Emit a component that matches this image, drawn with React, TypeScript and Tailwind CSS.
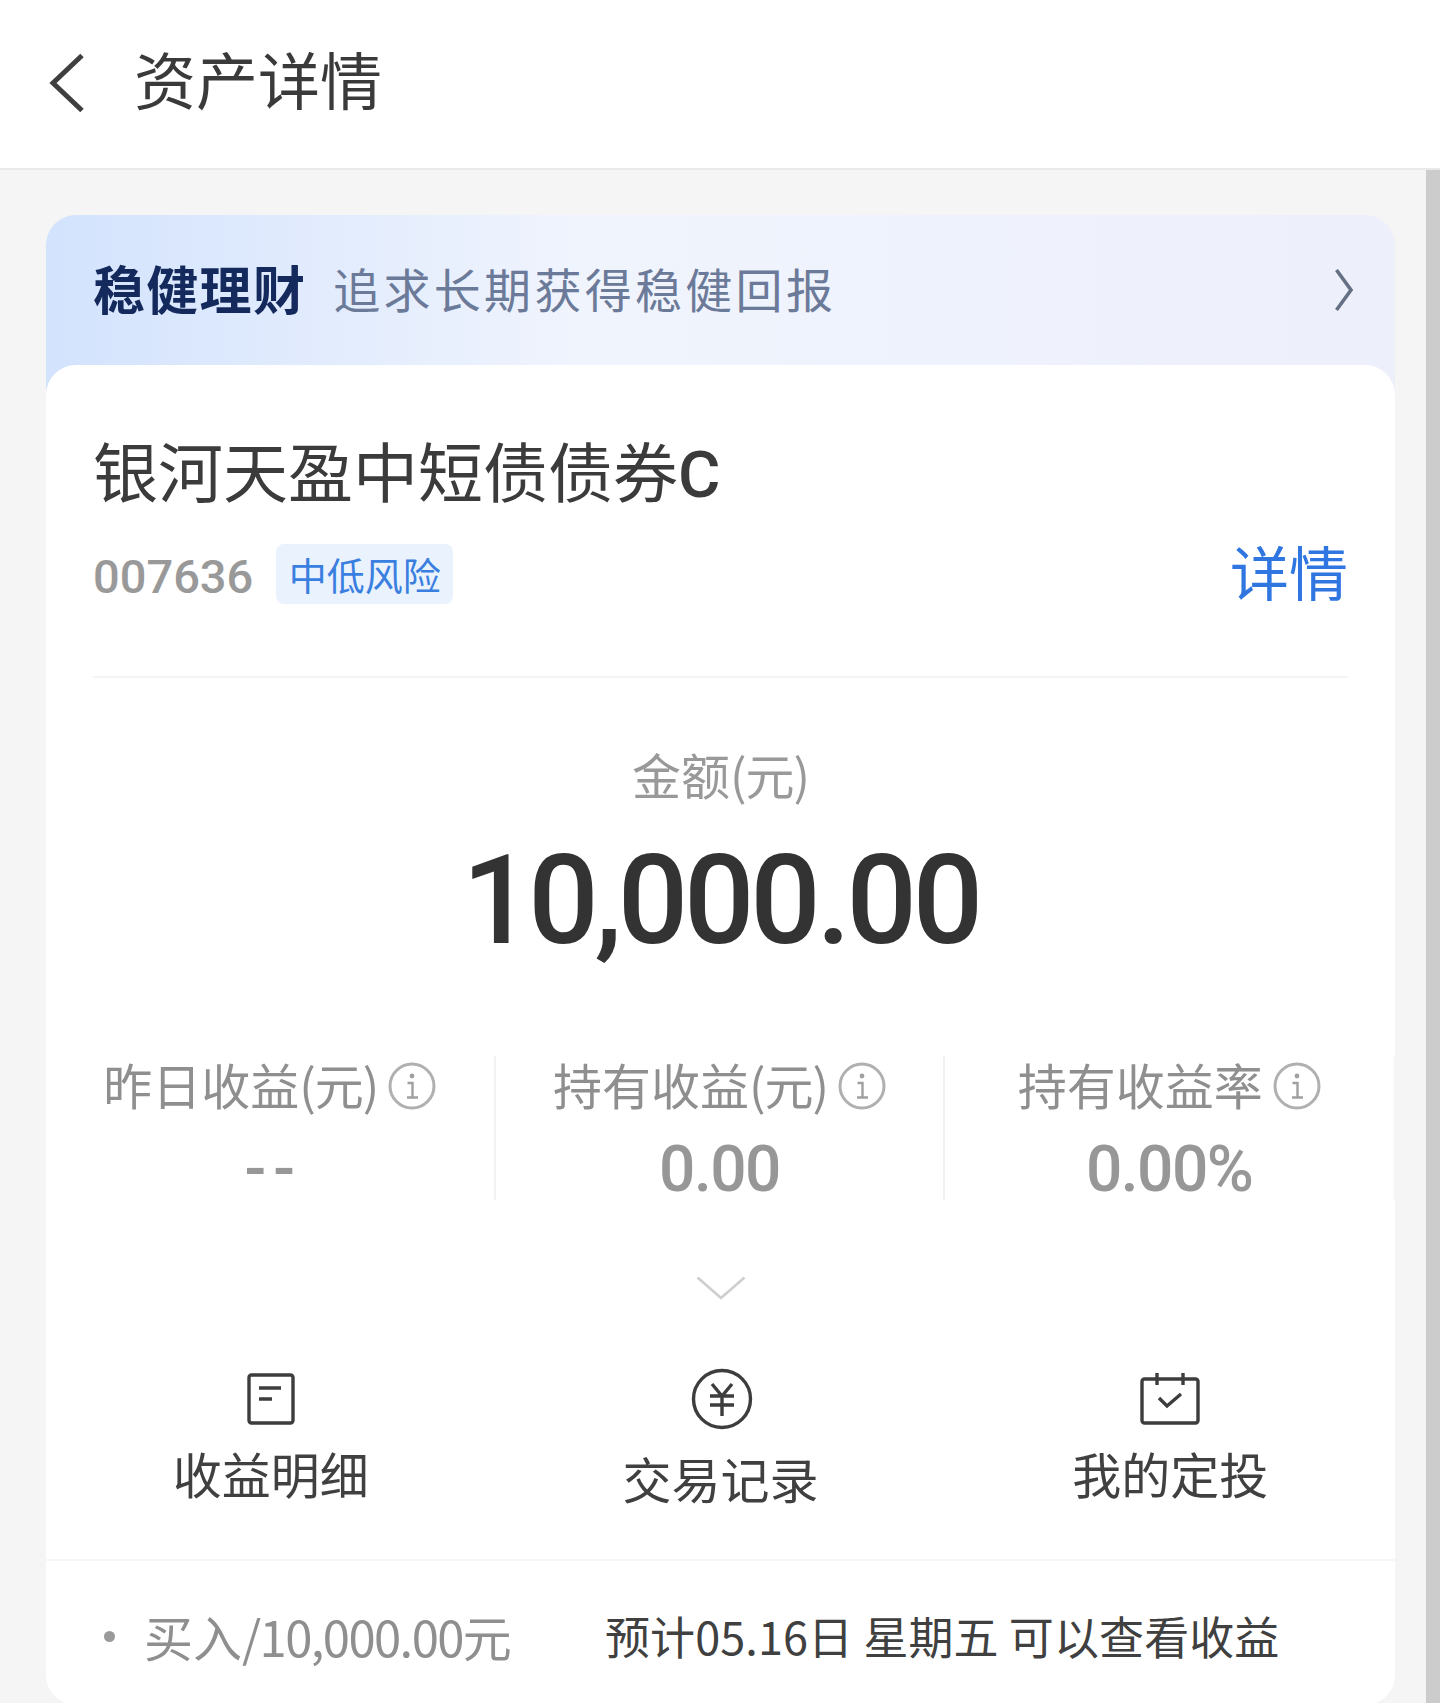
const cjk = "font-['Noto_Sans_CJK_SC','Noto_Sans',sans-serif]";

function Info() {
  return (
    <svg width="48" height="48" viewBox="0 0 48 48" fill="none" className="mt-[4px] shrink-0">
      <circle cx="24" cy="24" r="22" stroke="#b0b0b0" strokeWidth="3" />
      <circle cx="24" cy="14" r="2.4" fill="#a0a0a0" />
      <path d="M19.5 21h5v14M19 35.5h11" stroke="#a0a0a0" strokeWidth="2.4" />
    </svg>
  );
}

function Stat({ label, value, unit, last, wide }: { label: string; value: string; unit?: boolean; last?: boolean; wide?: boolean }) {
  return (
    <div className={`flex h-[144px] flex-col items-center border-r-2 ${last ? "border-[#f8f8f8]" : "border-[#f2f2f2]"}`}>
      <div className="mt-[3px] flex h-[50px] items-center gap-[10px]">
        <span className="text-[49px] leading-[50px] text-[#8f8f8f]">
          {label}
          {unit && <span className="tracking-[-1px]">(元)</span>}
        </span>
        <Info />
      </div>
      <div
        className={`mt-[25px] font-['Roboto',sans-serif] text-[64px] font-medium leading-[72px] text-[#979797] ${
          wide ? "pl-[7px] tracking-[7px]" : "tracking-[-1.5px]"
        }`}
      >
        {value}
      </div>
    </div>
  );
}

function Action({ label, icon, shift }: { label: string; icon: React.ReactNode; shift: string }) {
  return (
    <div className={`flex flex-col items-center ${shift}`}>
      {icon}
      <div className="mt-[23px] text-[49px] leading-[50px] text-[#404040]">{label}</div>
    </div>
  );
}

export default function App() {
  return (
    <div className={`flex h-[1703px] w-full flex-col overflow-hidden bg-[#f5f5f5] ${cjk}`}>
      <header className="flex h-[170px] shrink-0 items-center border-b-2 border-[#e9e9e9] bg-white pb-[2px] pl-[49px]">
        <svg width="36" height="60" viewBox="0 0 36 60" fill="none">
          <path d="M33 2.5 4 30l29 27.5" stroke="#3f3f3f" strokeWidth="5" />
        </svg>
        <h1 className="mb-[10px] ml-[49px] text-[62px] font-normal leading-[70px] text-[#3a3a3a]">资产详情</h1>
      </header>

      <div className="flex min-h-0 flex-1">
        <main className="min-w-0 flex-1 pl-[46px] pr-[31px] pt-[45px]">
          <section className="flex h-[180px] items-start rounded-t-[30px] bg-gradient-to-r from-[#d3e3fd] via-[#f0f4fd] via-40% to-[#edf0fb] pl-[47px] pr-[41px] pt-[43px]">
            <span className="text-[52px] font-bold leading-[60px] tracking-[1.3px] text-[#14295c]">稳健理财</span>
            <span className="ml-[27px] text-[47px] leading-[60px] tracking-[3.3px] text-[#6c7a99]">追求长期获得稳健回报</span>
            <svg width="20" height="44" viewBox="0 0 20 44" fill="none" className="ml-auto mt-[10px]">
              <path d="M2.5 2 17 22 2.5 42" stroke="#667085" strokeWidth="3.6" />
            </svg>
          </section>

          <section className="relative -mt-[30px] h-[1340px] rounded-[30px] bg-white">
            <div className="px-[47px]">
              <h2 className="pt-[69px] text-[65px] font-normal leading-[70px] text-[#3b3b3b]">
                银河天盈中短债债券<span className="font-['Roboto',sans-serif] font-medium">C</span>
              </h2>
              <div className="mt-[34px] flex h-[60px] items-center">
                <span className="mt-[6px] font-['Roboto',sans-serif] text-[47px] font-medium leading-[60px] text-[#999999]">007636</span>
                <span className="ml-[23px] flex h-[60px] w-[177px] items-center justify-center rounded-[8px] bg-[#e9f2fd] text-[38px] leading-[44px] text-[#3a7fe0]">
                  中低风险
                </span>
                <span className="mb-[6px] ml-auto text-[59px] leading-[60px] text-[#2f76e1]">详情</span>
              </div>
              <div className="mt-[72px] h-[2px] bg-[#f4f4f4]" />
            </div>

            <div className="mt-[66px] text-center text-[49px] leading-[60px] text-[#999999]">
              金额<span className="tracking-[-1px]">(元)</span>
            </div>
            <div className="mt-[32px] text-center font-['Roboto',sans-serif] text-[124px] font-medium leading-[130px] tracking-[-4.3px] text-[#333333]">
              10,000.00
            </div>

            <div className="mt-[90px] grid grid-cols-3">
              <Stat label="昨日收益" value="--" unit wide />
              <Stat label="持有收益" value="0.00" unit />
              <Stat label="持有收益率" value="0.00%" last />
            </div>

            <div className="mt-[76px] flex justify-center">
              <svg width="50" height="24" viewBox="0 0 50 24" fill="none">
                <path d="M1.5 1.5 25 22 48.5 1.5" stroke="#cfcfcf" strokeWidth="2.6" />
              </svg>
            </div>

            <div className="mt-[73px] grid h-[186px] grid-cols-3 items-start">
              <Action
                label="收益明细"
                shift="pt-[0px]"
                icon={
                  <svg width="48" height="52" viewBox="0 0 48 52" fill="none">
                    <rect x="2" y="2" width="44" height="48" rx="2.5" stroke="#3d3d3d" strokeWidth="3.4" />
                    <path d="M12 15h22M12 26h13" stroke="#3d3d3d" strokeWidth="3.4" />
                  </svg>
                }
              />
              <Action
                label="交易记录"
                shift="-mt-[5px]"
                icon={
                  <svg width="62" height="62" viewBox="0 0 62 62" fill="none" className="ml-[3px]">
                    <circle cx="31" cy="31" r="28.5" stroke="#3d3d3d" strokeWidth="3.4" />
                    <path d="M21 16 31 28l10-12M19 28h24M19 37h24M31 28v20" stroke="#3d3d3d" strokeWidth="3.4" />
                  </svg>
                }
              />
              <Action
                label="我的定投"
                shift="pt-[0px]"
                icon={
                  <svg width="60" height="52" viewBox="0 0 60 52" fill="none">
                    <rect x="2" y="6" width="56" height="44" rx="2.5" stroke="#3d3d3d" strokeWidth="3.4" />
                    <path d="M17 0v12M43 0v12" stroke="#3d3d3d" strokeWidth="3.4" />
                    <path d="M19 25l8 8 14-12" stroke="#3d3d3d" strokeWidth="3.4" />
                  </svg>
                }
              />
            </div>

            <div className="h-[2px] bg-[#f7f7f7]" />

            <div className="mt-[45px] flex h-[60px] items-center pl-[58px]">
              <span className="h-[11px] w-[11px] shrink-0 rounded-full bg-[#9a9a9a]" />
              <span className="ml-[29px] w-[461px] shrink-0 whitespace-nowrap text-[49px] leading-[60px] text-[#8f8f8f]">
                买入<span className="tracking-[-1.6px]">/10,000.00</span>元
              </span>
              <span className="whitespace-nowrap text-[45px] leading-[60px] tracking-[0.1px] text-[#404040]">预计05.16日 星期五 可以查看收益</span>
            </div>
          </section>
        </main>
        <div className="w-[14px] shrink-0 bg-[#cccccc]" />
      </div>
    </div>
  );
}
